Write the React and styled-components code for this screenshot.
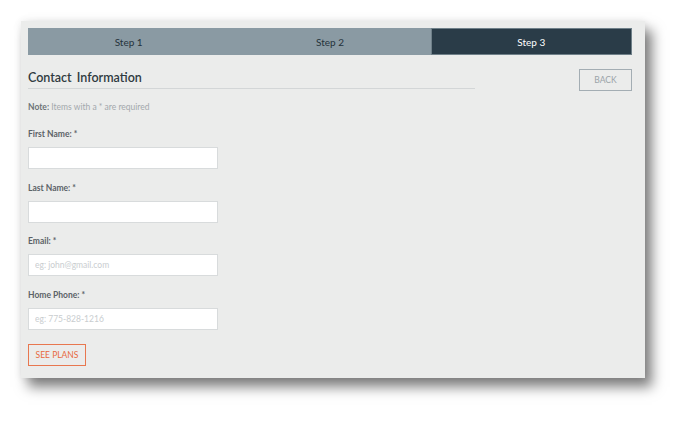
import React from "react";
import styled, { createGlobalStyle } from "styled-components";

const GlobalStyle = createGlobalStyle`
  html, body {
    margin: 0;
    padding: 0;
    background: #ffffff;
    font-family: Lato, "Open Sans", sans-serif;
  }
`;

const Page = styled.div`
  width: 687px;
  height: 421px;
  padding: 21px 0 0 21px;
  box-sizing: border-box;
`;

const Panel = styled.div`
  width: 624px;
  height: 357px;
  box-sizing: border-box;
  padding: 7px 13px 0 7px;
  background: #ebeceb;
  box-shadow: 7px 9px 12px rgba(0, 0, 0, 0.5), 0 0 8px rgba(0, 0, 0, 0.08);
`;

const StepBar = styled.div`
  display: grid;
  grid-template-columns: 1fr 1fr 1fr;
  height: 27px;
  background: #8a9aa3;
`;

const Step = styled.div`
  display: flex;
  align-items: center;
  justify-content: center;
  font-size: 10px;
  color: ${(p) => (p.$active ? "#ffffff" : "#25333c")};
  background: ${(p) => (p.$active ? "#2a3c48" : "transparent")};
  border: ${(p) => (p.$active ? "1px solid #6f8089" : "none")};
`;

const Body = styled.div`
  display: flex;
  justify-content: space-between;
  align-items: flex-start;
`;

const Form = styled.div`
  width: 447px;
  display: flex;
  flex-direction: column;
`;

const Title = styled.h2`
  margin: 15px 0 0;
  padding-bottom: 2px;
  font-size: 12.5px;
  line-height: 16px;
  font-weight: 600;
  word-spacing: 2px;
  color: #2f3a40;
  border-bottom: 1px solid #d3d6d7;
`;

const Note = styled.p`
  margin: 12px 0 15px;
  font-size: 8.5px;
  line-height: 12px;
  color: #a3a8ab;
  strong {
    color: #6d7377;
    font-weight: 700;
  }
`;

const Field = styled.div`
  display: flex;
  flex-direction: column;
  margin-bottom: 12.5px;
`;

const Label = styled.label`
  font-size: 8.5px;
  line-height: 12px;
  font-weight: 700;
  color: #5b6267;
  margin-bottom: 7px;
`;

const Input = styled.input`
  width: 190px;
  height: 22px;
  box-sizing: border-box;
  border: 1px solid #d8dbdc;
  background: #ffffff;
  padding: 0 6px;
  font-family: inherit;
  font-size: 8.5px;
  outline: none;
  &::placeholder {
    color: #c9cdcf;
  }
`;

const Actions = styled.div`
  display: flex;
  margin-top: 2px;
`;

const OutlineButton = styled.button`
  display: block;
  height: 22px;
  width: ${(p) => p.$width}px;
  box-sizing: border-box;
  padding: 0;
  background: transparent;
  font-family: inherit;
  font-size: 8.5px;
  color: ${(p) => p.$color};
  border: 1.5px solid ${(p) => p.$border};
  margin-top: ${(p) => p.$top || 0}px;
`;

const fields = [
  { label: "First Name:", placeholder: "" },
  { label: "Last Name:", placeholder: "" },
  { label: "Email:", placeholder: "eg: john@gmail.com" },
  { label: "Home Phone:", placeholder: "eg: 775-828-1216" },
];

export default function App() {
  return (
    <Page>
      <GlobalStyle />
      <Panel>
        <StepBar>
          <Step>Step 1</Step>
          <Step>Step 2</Step>
          <Step $active>Step 3</Step>
        </StepBar>
        <Body>
          <Form>
            <Title>Contact Information</Title>
            <Note>
              <strong>Note:</strong> Items with a * are required
            </Note>
            {fields.map((f) => (
              <Field key={f.label}>
                <Label>{f.label} *</Label>
                <Input placeholder={f.placeholder} />
              </Field>
            ))}
            <Actions>
              <OutlineButton $width={58} $color="#e8683c" $border="#e8774f">
                SEE PLANS
              </OutlineButton>
            </Actions>
          </Form>
          <OutlineButton $width={53} $top={14} $color="#9aa3a8" $border="#a3adb3">
            BACK
          </OutlineButton>
        </Body>
      </Panel>
    </Page>
  );
}
